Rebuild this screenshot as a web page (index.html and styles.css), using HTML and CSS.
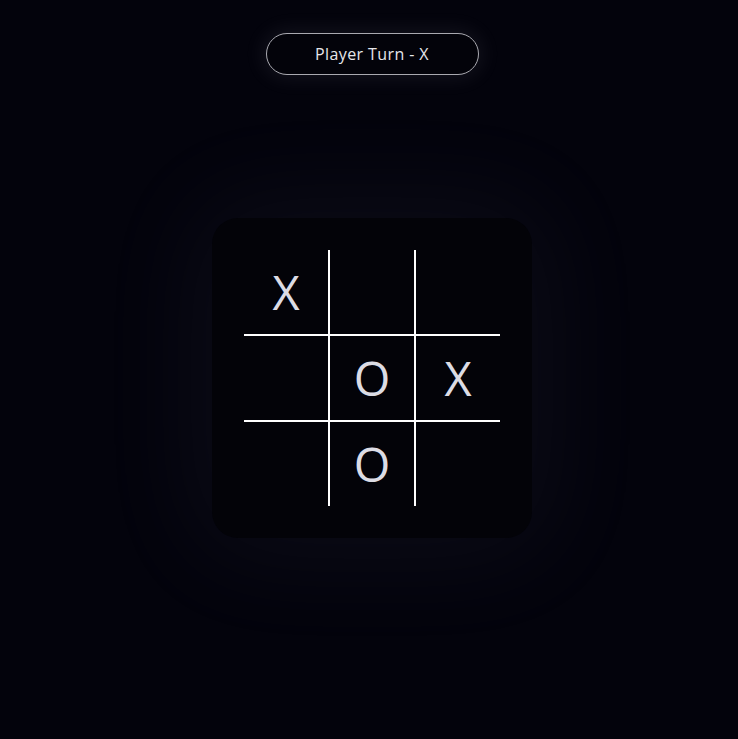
FILE: index.html
```html
<!DOCTYPE html>
<html>
<head>
<meta charset="utf-8">
<link rel="stylesheet" href="styles.css">
</head>
<body>
<main class="app">
  <div class="turn">Player Turn - X</div>
  <div class="board">
    <div class="grid">
      <div class="cell">X</div>
      <div class="cell"></div>
      <div class="cell"></div>
      <div class="cell"></div>
      <div class="cell">O</div>
      <div class="cell">X</div>
      <div class="cell"></div>
      <div class="cell">O</div>
      <div class="cell"></div>
    </div>
  </div>
</main>
</body>
</html>
```
FILE: styles.css
```css
html, body {
  margin: 0;
  height: 100%;
  background: #03030c;
}
body {
  font-family: "Open Sans", "Lato", sans-serif;
  overflow: hidden;
}
.app {
  display: flex;
  flex-direction: column;
  align-items: center;
  padding-top: 33px;
  padding-left: 6px;
}
.turn {
  box-sizing: border-box;
  width: 213px;
  height: 42px;
  border: 1px solid #a9a9b0;
  border-radius: 21px;
  background: #03030a;
  color: #e6e6ea;
  font-size: 16px;
  letter-spacing: 0.4px;
  display: flex;
  align-items: center;
  justify-content: center;
  box-shadow: 0 0 20px 4px rgba(200, 200, 220, 0.08);
}
.board {
  margin-top: 143px;
  width: 320px;
  height: 320px;
  box-sizing: border-box;
  padding: 32px;
  border-radius: 26px;
  background: #030308;
  box-shadow: 0 0 110px 20px rgba(190, 190, 220, 0.055);
}
.grid {
  display: grid;
  grid-template-columns: repeat(3, 84px);
  grid-template-rows: repeat(3, 84px);
  gap: 2px;
  background: #ffffff;
}
.cell {
  background: #030308;
  color: #dcdce4;
  font-size: 47px;
  display: flex;
  align-items: center;
  justify-content: center;
  line-height: 1;
}
```
